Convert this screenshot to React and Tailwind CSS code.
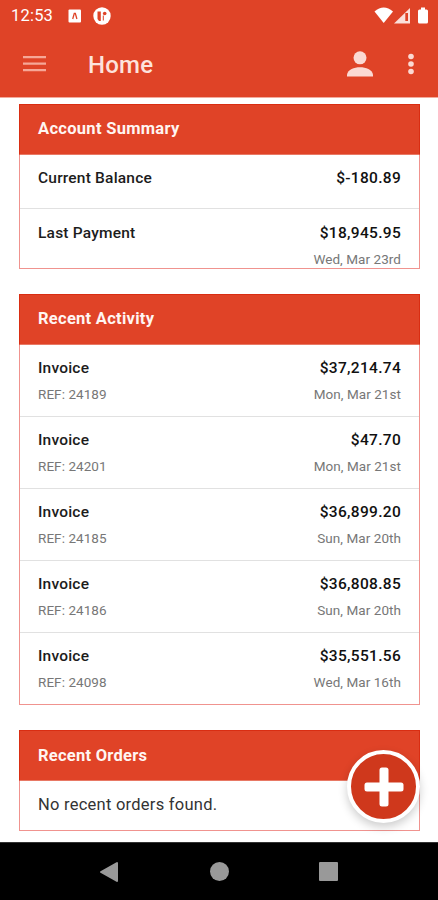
const activity = [
  { ref: '24189', amount: '$37,214.74', date: 'Mon, Mar 21st' },
  { ref: '24201', amount: '$47.70', date: 'Mon, Mar 21st' },
  { ref: '24185', amount: '$36,899.20', date: 'Sun, Mar 20th' },
  { ref: '24186', amount: '$36,808.85', date: 'Sun, Mar 20th' },
  { ref: '24098', amount: '$35,551.56', date: 'Wed, Mar 16th' },
];

function StatusBar() {
  return (
    <div className="flex h-8 items-center justify-between pl-[11px] pr-2 text-white">
      <div className="flex items-center">
        <span className="w-[57px] text-[16.5px] leading-8 tracking-[0.2px]">12:53</span>
        <svg width="14" height="14" viewBox="0 0 14 14">
          <rect x="0.5" y="0.5" width="12.500" height="13" rx="1" fill="#fff" />
          <path d="M4.7 10 6.3 4.300h1L8.900 10" fill="none" stroke="#df4327" strokeWidth="1.300" />
        </svg>
        <svg className="ml-[11px]" width="18" height="18" viewBox="0 0 18 18">
          <circle cx="9" cy="9" r="8.700" fill="#fff" />
          <path d="M4.500 4.500h3.300v9.500H6l-1.500-2zM9.800 8.500h1v5h-1z" fill="#df4327" />
          <circle cx="11.700" cy="6.500" r="1.800" fill="#df4327" />
        </svg>
      </div>
      <svg width="56" height="18" viewBox="0 0 56 18">
        <path d="M0.500 4.500Q9.700-3.500 19 4.500L9.700 16z" fill="#fff" />
        <path d="M20 16.500 36 1v15.500z" fill="#fbe0da" />
        <path d="M31.300 6h2.700v8h-2.700z" fill="#df4327" />
        <path d="M47 0.500h4v2h1.500q1.500 0 1.500 1.500v11q0 1.500-1.500 1.500h-7q-1.500 0-1.500-1.500V4q0-1.500 1.500-1.500H47z" fill="#fff" />
      </svg>
    </div>
  );
}

function AppBar() {
  return (
    <div className="flex h-[65px] items-center pb-px">
      <svg className="ml-[23px]" width="24" height="18" viewBox="0 0 24 18">
        <path d="M0 2.200h23M0 8.700h23M0 15.200h23" stroke="#f6a797" strokeWidth="2.300" />
      </svg>
      <h1 className="ml-[41px] mt-0.5 text-[24px] font-medium leading-8 tracking-[0.200px] text-[#fde3dd]">Home</h1>
      <svg className="ml-auto" width="26" height="26" viewBox="0 0 26 26">
        <circle cx="13" cy="6.800" r="6.500" fill="#fbd9d3" />
        <path d="M0 25.500v-2C1 18.500 7 16.300 13 16.300s12 2.200 13 7.200v2z" fill="#fbd9d3" />
      </svg>
      <svg className="ml-[35px] mr-[24px]" width="6" height="22" viewBox="0 0 6 22">
        <circle cx="3" cy="3.500" r="2.800" fill="#fbd9d3" />
        <circle cx="3" cy="11" r="2.800" fill="#fbd9d3" />
        <circle cx="3" cy="18.500" r="2.800" fill="#fbd9d3" />
      </svg>
    </div>
  );
}

function Card({ title, titleClass, children }) {
  return (
    <section className="border border-[#f0938f]">
      <h2 className={`-mx-px -mt-px h-[51px] border border-[#d92d12] border-b-[#e87965] bg-[#e04327] pl-[18px] text-[16.500px] font-bold text-[#fff5f2] ${titleClass}`}>
        {title}
      </h2>
      {children}
    </section>
  );
}

function Row({ label, amount, refNo, date, height }) {
  return (
    <div className={`flex justify-between px-[18px] ${height}`}>
      <div className="flex flex-col">
        <span className="text-[15.500px] font-medium leading-6 tracking-[0.200px] text-[#1c1c1c]">{label}</span>
        {refNo && <span className="mt-0.5 text-[13.500px] leading-6 tracking-[0.060px] text-[#777]">REF: {refNo}</span>}
      </div>
      <div className="flex flex-col items-end">
        <span className="text-[15.500px] font-medium leading-6 tracking-[0.300px] text-[#111]">{amount}</span>
        {date && <span className="mt-0.5 text-[13.500px] leading-6 tracking-[0.060px] text-[#777]">{date}</span>}
      </div>
    </div>
  );
}

export default function App() {
  return (
    <div className="flex h-[900px] w-[438px] flex-col overflow-hidden bg-white font-[Roboto,sans-serif]">
      <header className="h-[98px] shrink-0 border-b border-[#f3aa9c] bg-[#df4327]">
        <StatusBar />
        <AppBar />
      </header>
      <main className="relative flex h-[744px] shrink-0 flex-col gap-[25px] pl-[19px] pr-[18px] pt-[6px]">
        <Card title="Account Summary" titleClass="tracking-[0.300px] leading-[48px]">
          <Row label="Current Balance" amount="$-180.89" height="h-[54px] border-b border-[#e1e1e1] pt-[11px]" />
          <Row label="Last Payment" amount="$18,945.95" date="Wed, Mar 23rd" height="h-[59px] pt-3" />
        </Card>
        <Card title="Recent Activity" titleClass="tracking-[0.270px] leading-[48px]">
          {activity.map((item, i) => (
            <Row
              key={item.ref}
              label="Invoice"
              refNo={item.ref}
              amount={item.amount}
              date={item.date}
              height={i < activity.length - 1 ? 'h-[72px] border-b border-[#e1e1e1] pt-[11px]' : 'h-[71px] pt-[11px]'}
            />
          ))}
        </Card>
        <Card title="Recent Orders" titleClass="tracking-[0.250px] leading-[49px]">
          <p className="h-[49px] pl-[18px] text-[16.500px] leading-[48px] tracking-[0.250px] text-[#333]">No recent orders found.</p>
        </Card>
        <button aria-label="Add" className="absolute bottom-[19px] right-[18px] flex size-[73px] items-center justify-center rounded-full border-4 border-white bg-[#cf381c] shadow-[0_4px_10px_rgba(0,0,0,0.2)]">
          <svg width="40" height="40" viewBox="0 0 40 40">
            <rect x="15.500" y="0.500" width="9" height="39" rx="2.500" fill="#fff" />
            <rect x="0.500" y="15.500" width="39" height="9" rx="2.500" fill="#fff" />
          </svg>
        </button>
      </main>
      <nav className="flex flex-1 items-center border-t border-[#333] bg-black">
        <svg className="ml-[99px]" width="20" height="22" viewBox="0 0 20 22">
          <path d="M2 11 18 2v18z" fill="#999" stroke="#999" strokeWidth="2" strokeLinejoin="round" />
        </svg>
        <span className="ml-[91px] size-[19px] rounded-full bg-[#999]" />
        <span className="ml-[90px] size-[19px] rounded-[1px] bg-[#999]" />
      </nav>
    </div>
  );
}
